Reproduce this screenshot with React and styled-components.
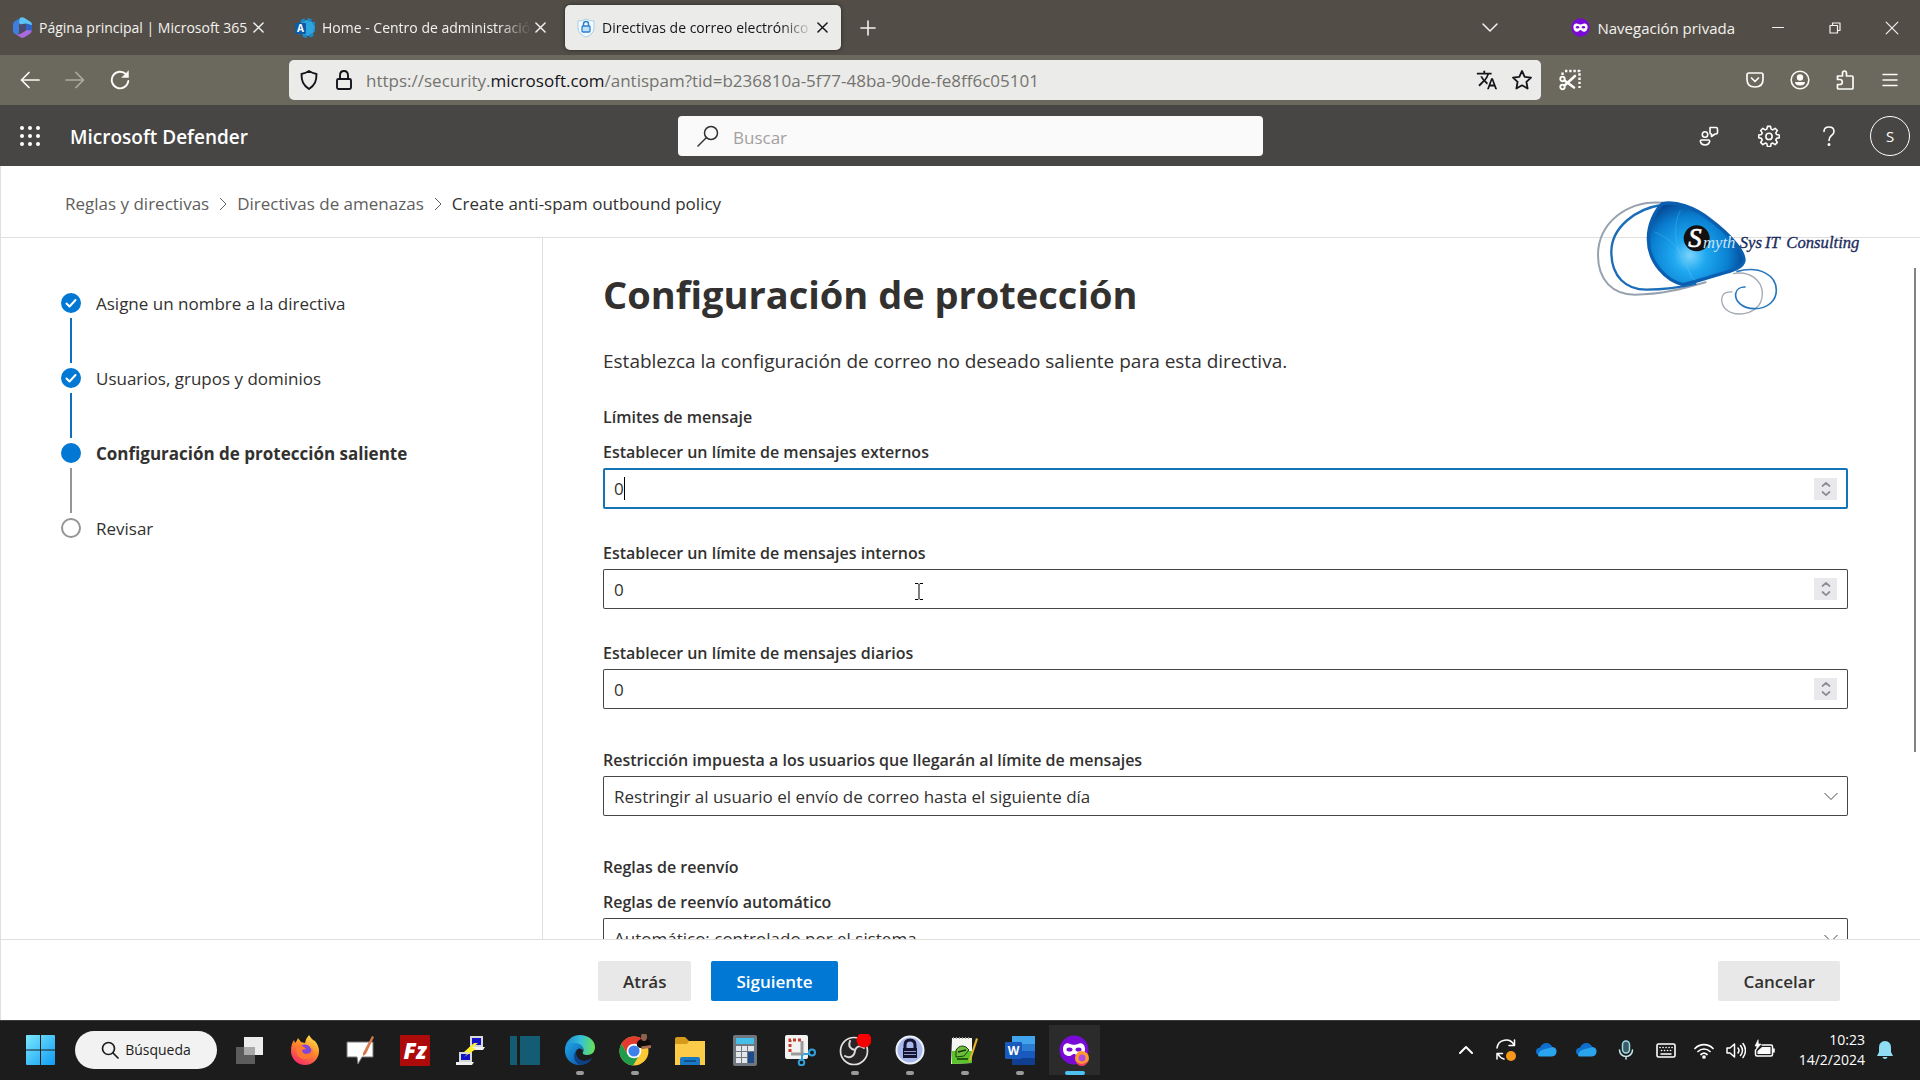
import React from "react";
import styled, { createGlobalStyle, css } from "styled-components";
import { MdTranslate } from "react-icons/md";

const GlobalStyle = createGlobalStyle`
  * { box-sizing: border-box; }
  html, body { margin: 0; padding: 0; background: #fff; }
  body, button, input, select {
    font-family: "Open Sans", "Noto Sans", sans-serif;
    font-size: 17px;
    color: #323130;
  }
  button { background: none; border: 0; padding: 0; cursor: pointer; }
  a { color: inherit; text-decoration: none; }
  h1, h2, p, ol, ul { margin: 0; padding: 0; font-weight: inherit; font-size: inherit; }
  svg { display: block; flex: none; }
`;

const Screen = styled.div`
  display: flex;
  flex-direction: column;
  height: 100vh;
  overflow: hidden;
`;

/* ---------- browser ---------- */

const TabBar = styled.header`
  display: flex;
  align-items: center;
  height: 55px;
  flex: none;
  background: #524e47;
  color: #f3f2ef;
`;

const TabList = styled.div`
  display: flex;
  gap: 6px;
  padding-left: 1px;
`;

const Tab = styled.div`
  display: flex;
  align-items: center;
  width: 276px;
  height: 45px;
  padding: 0 10px 0 12px;
  border-radius: 5px;
  ${(p) =>
    p.$active &&
    css`
      background: #ebebe9;
      color: #15141a;
      box-shadow: 0 0 4px rgba(0, 0, 0, 0.5);
    `}
`;

const TabTitle = styled.span`
  flex: 1;
  min-width: 0;
  margin-left: 7px;
  overflow: hidden;
  white-space: nowrap;
  font-size: 14px;
  line-height: 24px;
  mask-image: ${(p) => (p.$fade ? "linear-gradient(to left, transparent, #000 32px)" : "none")};
`;

const IconButton = styled.button`
  display: flex;
  align-items: center;
  justify-content: center;
  flex: none;
  width: ${(p) => p.$w || 45}px;
  height: ${(p) => p.$h || 40}px;
  color: inherit;
  opacity: ${(p) => (p.$dim ? 0.45 : 1)};
`;

const Spacer = styled.div`
  flex: 1;
`;

const PrivateBadge = styled.div`
  display: flex;
  align-items: center;
  gap: 7px;
  margin: 0 14px 0 64px;
  font-size: 15px;
  line-height: 24px;
  white-space: nowrap;
`;

const NavBar = styled.nav`
  display: flex;
  align-items: center;
  height: 50px;
  flex: none;
  padding: 0 8px 0 7px;
  background: #6b685d;
  color: #fbfbf8;
`;

const NavGroup = styled.div`
  display: flex;
  flex: none;
  width: ${(p) => p.$w || "auto"};
`;

const UrlBar = styled.div`
  display: flex;
  align-items: center;
  flex: 1;
  min-width: 0;
  height: 40px;
  padding: 0 2px 0 2px;
  border-radius: 5px;
  background: #ebebe9;
  color: #15141a;
`;

const Url = styled.span`
  flex: 1;
  margin-left: 5px;
  padding-top: 2px;
  overflow: hidden;
  white-space: nowrap;
  font-size: 17px;
  line-height: 24px;
  color: #74736f;
  b {
    font-weight: 400;
    color: #15141a;
  }
`;

/* ---------- product header ---------- */

const SuiteBar = styled.header`
  display: flex;
  align-items: center;
  height: 61px;
  flex: none;
  padding: 0 10px 0 7px;
  background: #484644;
  color: #fff;
`;

const SuiteSide = styled.div`
  display: flex;
  align-items: center;
  justify-content: ${(p) => (p.$end ? "flex-end" : "flex-start")};
  flex: ${(p) => (p.$end ? "1" : "0 0 671px")};
`;

const Brand = styled.a`
  margin-left: 18px;
  padding-top: 3px;
  font-size: 19px;
  line-height: 28px;
  font-weight: 600;
`;

const SearchBox = styled.label`
  display: flex;
  align-items: center;
  gap: 14px;
  width: 585px;
  height: 40px;
  padding: 0 19px;
  border-radius: 4px;
  background: #fafafa;
  color: #323130;
  input {
    flex: 1;
    min-width: 0;
    border: 0;
    padding: 3px 0 0;
    outline: 0;
    background: none;
    font-size: 17px;
  }
  input::placeholder {
    color: #a3a19f;
    opacity: 1;
  }
`;

const Avatar = styled.button`
  width: 40px;
  height: 40px;
  margin-left: 11px;
  border: 1px solid #fff;
  border-radius: 50%;
  color: #fff;
  font-size: 15px;
`;

/* ---------- wizard page ---------- */

const Page = styled.div`
  display: flex;
  flex-direction: column;
  flex: 1;
  min-height: 0;
  border-left: 1px solid #e1dfdd;
  position: relative;
`;

const Breadcrumb = styled.nav`
  display: flex;
  align-items: center;
  gap: 7px;
  height: 72px;
  flex: none;
  padding: 4px 64px 0;
  border-bottom: 1px solid #e1dfdd;
  line-height: 24px;
  color: #605e5c;
  [aria-current] {
    color: #323130;
  }
`;

const Body = styled.div`
  display: flex;
  flex: 1;
  min-height: 0;
`;

const Steps = styled.ol`
  flex: none;
  width: 542px;
  padding: 53px 59px;
  border-right: 1px solid #e1dfdd;
  list-style: none;
`;

const Step = styled.li`
  display: flex;
  gap: 14px;
  height: 75px;
  line-height: 26px;
  font-weight: ${(p) => (p.$state === "current" ? 700 : 400)};
`;

const StepTrack = styled.div`
  display: flex;
  flex-direction: column;
  align-items: center;
  gap: 5px;
  padding-top: 2px;
  width: 22px;
`;

const Dot = styled.span`
  display: flex;
  align-items: center;
  justify-content: center;
  flex: none;
  width: 20px;
  height: 20px;
  border-radius: 50%;
  border: 2px solid ${(p) => (p.$state === "todo" ? "#979593" : "#0078d4")};
  background: ${(p) => (p.$state === "todo" ? "#fff" : "#0078d4")};
`;

const Rail = styled.span`
  width: 2px;
  height: 45px;
  background: ${(p) => (p.$done ? "#106ebe" : "#979593")};
`;

const Content = styled.main`
  flex: 1;
  min-width: 0;
  padding: 28px 72px 0 60px;
  overflow: hidden;
`;

const Title = styled.h1`
  font-size: 38px;
  line-height: 56px;
  font-weight: 700;
`;

const Lead = styled.p`
  margin-top: 25px;
  font-size: 19px;
  line-height: 28px;
`;

const Section = styled.h2`
  margin-top: ${(p) => p.$gap}px;
  font-size: 16px;
  line-height: 24px;
  font-weight: 600;
`;

const Field = styled.div`
  margin-top: ${(p) => p.$gap}px;
`;

const FieldLabel = styled.label`
  display: block;
  font-size: 16px;
  line-height: 24px;
  font-weight: 600;
`;

const FieldBox = styled.div`
  display: flex;
  align-items: center;
  position: relative;
  height: ${(p) => (p.$focused ? 41 : 40)}px;
  margin-top: 4px;
  border-radius: 2px;
  box-shadow: inset 0 0 0 ${(p) => (p.$focused ? "2px #1374b8" : "1px #484644")};
`;

const NumberInput = styled.input`
  flex: 1;
  min-width: 0;
  height: 100%;
  padding: 0 11px;
  border: 0;
  outline: 0;
  background: none;
  appearance: textfield;
  &::-webkit-inner-spin-button {
    display: none;
  }
`;

const Spinner = styled.span`
  display: flex;
  align-items: center;
  justify-content: center;
  width: 23px;
  height: 22px;
  margin-right: 11px;
  background: #e9e9ed;
  color: #8b8b90;
`;

const Caret = styled.span`
  position: absolute;
  left: 21px;
  top: 9px;
  width: 1px;
  height: 23px;
  background: #000;
`;

const Pointer = styled.svg`
  position: absolute;
  left: 311px;
  top: 14px;
`;

const Select = styled.select`
  width: 100%;
  height: 100%;
  padding: 0 40px 0 11px;
  border: 0;
  outline: 0;
  background: none;
  appearance: none;
`;

const SelectArrow = styled.svg`
  position: absolute;
  right: 10px;
  top: 16px;
  pointer-events: none;
`;

const ScrollThumb = styled.div`
  position: absolute;
  right: 4px;
  top: 102px;
  width: 2px;
  height: 484px;
  background: #858381;
`;

const Footer = styled.footer`
  display: flex;
  align-items: center;
  gap: 20px;
  height: 81px;
  flex: none;
  padding: 2px 80px 0 597px;
  border-top: 1px solid #e1dfdd;
`;

const Action = styled.button`
  height: 40px;
  padding: 0 25px;
  border-radius: 2px;
  font-weight: 600;
  background: ${(p) => (p.$primary ? "#0078d4" : "#e8e8e8")};
  color: ${(p) => (p.$primary ? "#fff" : "#323130")};
`;

const Watermark = styled.svg`
  position: absolute;
  right: 53px;
  top: 31px;
`;

/* ---------- taskbar ---------- */

const Taskbar = styled.footer`
  display: flex;
  align-items: center;
  height: 60px;
  flex: none;
  padding: 0 24px 2px 26px;
  background: #1c1c1c;
  border-top: 1px solid #3a3a3a;
  color: #fff;
`;

const SearchPill = styled.button`
  display: flex;
  align-items: center;
  justify-content: center;
  gap: 6px;
  width: 142px;
  height: 38px;
  margin: 0 5px 0 20px;
  border-radius: 19px;
  background: #f2f2f2;
  color: #1c1c1c;
  font-size: 14px;
`;

const AppSlot = styled.button`
  display: flex;
  align-items: center;
  justify-content: center;
  position: relative;
  width: 55px;
  height: 50px;
  padding: 0 2px;
  background: ${(p) => (p.$run === "active" ? "#2b2b2b" : "none")};
  background-clip: content-box;
  &::after {
    content: "";
    display: ${(p) => (p.$run ? "block" : "none")};
    position: absolute;
    bottom: 0;
    width: ${(p) => (p.$run === "active" ? 20 : 8)}px;
    height: 4px;
    border-radius: 2px;
    background: ${(p) => (p.$run === "active" ? "#4cc2f1" : "#9a9a9a")};
  }
`;

const Clock = styled.time`
  margin: 0 9px 0 12px;
  width: 75px;
  text-align: right;
  font-size: 14px;
  line-height: 20px;
`;

/* ---------- icons ---------- */

const Line = ({ s = 20, w = 2, vb = 20, children, ...rest }) => (
  <svg
    width={s}
    height={s}
    viewBox={`0 0 ${vb} ${vb}`}
    fill="none"
    stroke="currentColor"
    strokeWidth={w}
    strokeLinecap="round"
    strokeLinejoin="round"
    aria-hidden="true"
    {...rest}
  >
    {children}
  </svg>
);

const Cross = ({ s = 12, w = 1.6 }) => (
  <Line s={s} vb={12} w={w}><path d="M1 1 11 11M11 1 1 11" /></Line>
);

const Mask = ({ s }) => (
  <svg width={s} height={s} viewBox="0 0 32 32" aria-hidden="true">
    <circle cx="16" cy="16" r="15.500" fill="#7a0bd6" />
    <path d="M4 15c0-5 4-7 8-5 2 1 6 1 8 0 4-2 8 0 8 5 0 5-3 8-6 8s-4-3-6-3-3 3-6 3-6-3-6-8z" fill="#fff" />
    <ellipse cx="11" cy="15.500" rx="2.800" ry="2.200" fill="#7a0bd6" />
    <ellipse cx="21" cy="15.500" rx="2.800" ry="2.200" fill="#7a0bd6" />
  </svg>
);

const M365Icon = () => (
  <svg width="19" height="21" viewBox="0 0 19 21" aria-hidden="true">
    <path d="M7 1 1.500 4.500Q0 5.500 0 7.500V14q0 2 2 3l1.500.8Q6 18 6 14V7q0-3 4-5z" fill="#3c7fe0" />
    <path d="M7 1q2-1.300 4.500 0l5.500 3.500q2 1 2 3V13q0-4-5-4Q6 9 6 5z" fill="#5cc3f2" />
    <path d="M19 12.500q0 3-2 4.200l-5.500 3.500q-2 1.200-4 0L3 17.600q3 0 6-1.600l4-2.500q2-1.500 1-4.500 5 0 5 3.500z" fill="#a86ae0" />
    <path d="M13 6.500 19 8v5.500l-6-.5z" fill="#2d62c9" />
    <path d="M6.500 7.500 13 6.500v6L8 15.500l-1.500-1z" fill="#4a4a6e" />
  </svg>
);

const AdminIcon = () => (
  <svg width="20" height="22" viewBox="0 0 20 22" aria-hidden="true">
    <circle cx="12" cy="11" r="8" fill="#2aa5e0" />
    <circle cx="12" cy="11" r="8.500" fill="none" stroke="#1988cc" strokeWidth="3" strokeDasharray="4 2.700" />
    <rect x="0" y="6" width="11" height="11" rx="1" fill="#0b5ca8" />
    <text x="5.500" y="14.800" fontFamily="Open Sans, sans-serif" fontWeight="700" fontSize="10" fill="#fff" textAnchor="middle">A</text>
  </svg>
);

const DefenderIcon = () => (
  <svg width="18" height="20" viewBox="0 0 18 20" fill="none" aria-hidden="true">
    <path d="M9 1Q12 3 17 3v7q0 6-8 9-8-3-8-9V3q5 0 8-2z" fill="#f4fbff" stroke="#a6cfe6" />
    <path d="M6.500 8.500V6q0-2.500 2.500-2.500T11.500 6v2.500" stroke="#2b7fd0" strokeWidth="1.500" />
    <rect x="5" y="8" width="8" height="6" rx="1" fill="#bfe0f8" stroke="#2b7fd0" strokeWidth="1.300" />
  </svg>
);

const ScissorIcon = () => (
  <Line s={22} vb={22} w={1.900}>
    <path d="M3.500 6V3.500M6 2h14.500v17" strokeDasharray="2.400 1.800" strokeLinecap="butt" strokeWidth="2.400" />
    <circle cx="3.500" cy="10" r="2.200" />
    <circle cx="3.500" cy="18" r="2.200" />
    <path d="M5.500 16.500 16 7M5.500 11.500 15 18.500" strokeWidth="2.600" />
  </Line>
);

const Waffle = () => (
  <svg width="20" height="20" viewBox="0 0 20 20" fill="currentColor" aria-hidden="true">
    {[2, 10, 18].map((y) => [2, 10, 18].map((x) => <circle key={`${x}-${y}`} cx={x} cy={y} r="2" />))}
  </svg>
);

const GearIcon = () => (
  <Line s={22} vb={24} w={1.700}>
    <path d="M10.300 1.500h3.400l.6 3 1.800.8 2.600-1.700 2.400 2.400-1.700 2.600.8 1.800 3 .6v3l-3 .6-.8 1.800 1.700 2.600-2.400 2.400-2.600-1.700-1.800.8-.6 3h-3.400l-.6-3-1.800-.8-2.600 1.700L2.900 19l1.700-2.600-.8-1.800-3-.6v-3l3-.6.8-1.800L2.900 6l2.400-2.400 2.600 1.700 1.800-.8z" />
    <circle cx="12" cy="12.500" r="3.400" />
  </Line>
);

const Logo = () => (
  <Watermark width="274" height="120" viewBox="100 110 822 360" fill="none" role="img" aria-label="Smyth Sys IT Consulting">
    <defs>
      <radialGradient id="drop" cx="390" cy="285" r="165" gradientUnits="userSpaceOnUse">
        <stop offset="0" stopColor="#7ad4fc" />
        <stop offset="0.3" stopColor="#1fa8f0" />
        <stop offset="0.7" stopColor="#0a80d2" />
        <stop offset="1" stopColor="#064a96" />
      </radialGradient>
    </defs>
    <path d="M310 127C200 118 115 190 115 285c0 75 45 118 110 118 80 0 145-18 215-38" stroke="#98a2ae" strokeWidth="6" />
    <path d="M305 134C230 145 155 200 155 275c0 75 45 113 105 113 60 0 100-6 150-18" stroke="#1b6db8" strokeWidth="7" />
    <path d="M520 340c50-10 88 20 88 60 0 40-33 61-68 61s-55-21-54-46c2-15 14-22 32-20" stroke="#a4abb5" strokeWidth="4" />
    <path d="M530 334c70-20 120 11 120 56 0 30-25 55-65 55s-60-25-57-45c2-13 14-21 30-20" stroke="#2476bd" strokeWidth="5" />
    <path d="M308 130c40-8 95 10 142 47 60 45 104 95 103 123-2 22-35 32-75 42-40 12-75 24-108 31-50-12-104-65-104-138 0-45 20-83 42-105z" fill="url(#drop)" stroke="#0b5fb0" strokeWidth="10" />
    <path d="M362 150c-25 50-20 130 45 210M285 215c50 20 90 60 110 140" stroke="#5cc4fa" strokeOpacity="0.35" strokeWidth="3" />
    <circle cx="411" cy="234" r="39" fill="#14100f" />
    <g fontFamily="Liberation Serif, serif" fontStyle="italic" fontSize="50">
      <text x="386" y="260" fontSize="80" fill="#fff" stroke="#fff" strokeWidth="2">S</text>
      <text x="430" y="262" fill="#c9e6fa">myth</text>
      <g fill="#1c2c5c" stroke="#1c2c5c">
        <text x="540" y="262">Sys</text>
        <text x="616" y="262">IT</text>
        <text x="680" y="262">Consulting</text>
      </g>
    </g>
  </Watermark>
);

const A = ({ children }) => (
  <svg width="32" height="32" viewBox="0 0 32 32" fill="none" aria-hidden="true">{children}</svg>
);

const apps = [
  { name: "Vista de tareas", icon: (
    <A><rect x="2" y="13" width="19" height="17" fill="#5c5c5c" /><rect x="10" y="3" width="19" height="18" fill="#ececec" /><rect x="10" y="13" width="11" height="8" fill="#a9a9a9" /></A>) },
  { name: "Firefox", icon: (
    <A>
      <defs><linearGradient id="fx" x1="24" y1="2" x2="8" y2="30" gradientUnits="userSpaceOnUse"><stop stopColor="#ffe14a" /><stop offset="0.45" stopColor="#ff8a2a" /><stop offset="1" stopColor="#f5286a" /></linearGradient></defs>
      <path d="M20 1q3 5 6 6 4 5 4 10a14 14 0 0 1-28 0q0-7 3-11l1 3q2-2 3-5l3 4 4 1q1-5 4-8z" fill="url(#fx)" />
      <circle cx="16" cy="17" r="6.500" fill="#8247d8" /><path d="M7 12q4-2 8 1l2 2-4 1q0 4 5 4 5-1 5-6 3 7-3 10-8 3-12-4z" fill="#ff7a30" />
    </A>) },
  { name: "Pizarra", icon: (
    <A><path d="M3 8h26v15H18l-4 7-1-7H3z" fill="#fff" stroke="#777" /><path d="m19 19 9-17 2 1-8 17-3 2z" fill="#d67b4b" /></A>) },
  { name: "FileZilla", icon: (
    <A><rect x="1" y="1" width="30" height="31" rx="1" fill="#ad0a0a" />
      <text x="16" y="25" textAnchor="middle" fontFamily="Open Sans, sans-serif" fontStyle="italic" fontWeight="800" fontSize="22" fill="#fff">Fz</text></A>) },
  { name: "PuTTY", icon: (
    <A>
      <path d="M16 2h13v11H16zM5 18h13v10H5z" fill="#d8d8d8" /><path d="M18 4h9v7h-9zM7 20h9v6H7z" fill="#1212c8" />
      <path d="M15 13h16l-2 3H15zM2 28h18l-2 3H2z" fill="#f0f0f0" /><path d="m20 9-10 9h5l-5 5 12-8-4-1 6-5z" fill="#ffee2e" />
    </A>) },
  { name: "Panel", icon: (
    <A><path d="M1 2h7v29H1zM11 2h20v29H11z" fill="#145c74" /></A>) },
  { name: "Edge", run: "open", icon: (
    <A>
      <defs>
        <linearGradient id="eg" x1="2" y1="10" x2="30" y2="14" gradientUnits="userSpaceOnUse"><stop stopColor="#1f8fd6" /><stop offset="0.5" stopColor="#35c0d8" /><stop offset="1" stopColor="#66e05a" /></linearGradient>
        <linearGradient id="eb" x1="4" y1="10" x2="24" y2="30" gradientUnits="userSpaceOnUse"><stop stopColor="#1b9de2" /><stop offset="1" stopColor="#0f4fa0" /></linearGradient>
      </defs>
      <path d="M1 16C1 7 8 1 16 1s15 5 15 12c0 5-3 8-8 8-3 0-5-1-4-3 2-3-1-7-6-7-6 0-11 2-12 5z" fill="url(#eg)" />
      <path d="M1 15c1-4 5-6 10-6 5 0 9 3 8 8-1-2-3-3-5-2-2 1-3 4-1 8 3 5 10 5 15 1-3 5-8 7-13 7C7 31 0 24 1 15z" fill="url(#eb)" />
      <path d="M14 15c-6 4-5 13 2 16 5 0 9-2 12-7-5 4-12 4-15-1-2-4-1-7 1-8z" fill="#0d4286" />
    </A>) },
  { name: "Chrome", run: "open", icon: (
    <A>
      <circle cx="15" cy="17" r="14.500" fill="#fcc934" />
      <path d="M15 2.500A14.500 14.500 0 0 0 2.400 9.700L9 21l6-11h13A14.500 14.500 0 0 0 15 2.500z" fill="#e33b2e" />
      <path d="M2.400 9.700A14.500 14.500 0 0 0 14 31.500L21 20l-12 1z" fill="#1e9b4b" />
      <circle cx="15" cy="17" r="7.300" fill="#fff" /><circle cx="15" cy="17" r="5.600" fill="#3d80ec" />
      <path d="M18 12q-1-5 4-7h6q4 1 4 8l-6 1q-6 1-8-2z" fill="#0d0b0b" /><ellipse cx="25" cy="3" rx="3" ry="4" fill="#8d6350" /><path d="M22 12.500 32 11v3l-9 1z" fill="#a36b50" />
    </A>) },
  { name: "Explorador", icon: (
    <A><path d="M1 5q0-2 2-2h8l4 4h14q2 0 2 2v4H1z" fill="#d69a1b" /><path d="M1 10h12l2-3h16v24H1z" fill="#fccb48" /><path d="M6 31v-6q0-2 2-2h16q2 0 2 2v6z" fill="#1a79c2" /><path d="M10 26h12v2H10z" fill="#0d528c" /></A>) },
  { name: "Calculadora", icon: (
    <A><rect x="4" y="1" width="24" height="31" rx="2" fill="#70777e" /><rect x="7" y="4" width="18" height="6" fill="#45bfe8" /><path d="M7 12h5v5H7zM13 12h5v5h-5zM19 12h6v5h-6zM7 18h5v5H7zM13 18h5v5h-5zM7 24h5v5H7zM13 24h5v5h-5z" fill="#e3e7ec" /><path d="M19 18h6v11h-6z" fill="#1c4d88" /></A>) },
  { name: "Recortes", icon: (
    <A>
      <rect x="1" y="1" width="23" height="24" rx="2" fill="#f2f2f2" />
      <path d="M6 18V6h11" stroke="#c53a2a" strokeWidth="3" strokeDasharray="3 2" />
      <path d="M18 7v13M7 20h13" stroke="#9a9a9a" strokeWidth="3" />
      <path d="M18 20v6M20 20h5" stroke="#31a2dc" strokeWidth="2" />
      <circle cx="28" cy="18.500" r="3" stroke="#31a2dc" strokeWidth="2" /><circle cx="17.500" cy="28.500" r="2.800" stroke="#31a2dc" strokeWidth="2" />
    </A>) },
  { name: "OBS", run: "open", icon: (
    <A>
      <circle cx="15" cy="17" r="13.500" fill="#262424" stroke="#e2e2e2" strokeWidth="1.700" />
      <g stroke="#d8d8d8" strokeWidth="2" strokeLinecap="round">
        <path d="M11 7c-2 5 0 8 5 9" />
        <path d="M16 16c2-4 5-5 9-2" />
        <path d="M16 16c0 6-5 9-10 6" />
      </g>
      <circle cx="25" cy="6" r="7.500" fill="#f90000" />
    </A>) },
  { name: "KeePass", run: "open", icon: (
    <A><circle cx="16" cy="16" r="13.500" fill="#a9b8ea" stroke="#eef1fb" strokeWidth="2" /><path d="M11 15V11q0-5 5-5t5 5v4" stroke="#14142e" strokeWidth="3" /><path d="M9 14h14v10H9z" fill="#14142e" /><path d="M10 17.500h12M10 20.500h12" stroke="#8d9cd0" /></A>) },
  { name: "Notepad++", run: "open", icon: (
    <A><path d="M3 4h20v25l-21 1z" fill="#f7f7f2" /><path d="M3 17h20v12l-20 1z" fill="#5cc42a" /><path d="M7 16q4-6 10-3l3 3-5 6-8 1z" fill="#6fbd3d" stroke="#1c3d10" /><path d="M8 25h11M9 18l8-2" stroke="#16340b" strokeWidth="1.500" /><path d="M4 4h18" stroke="#999" strokeWidth="2" strokeDasharray="1 2" /><path d="m20 26 7-22 2 1-7 21-2 2z" fill="#e5b52b" /></A>) },
  { name: "Word", run: "open", icon: (
    <A><rect x="8" y="2" width="23" height="29" rx="1" fill="#2b7cd3" /><path d="M8 2h23v8H8z" fill="#41a5ee" /><path d="M8 17h23v7H8z" fill="#185abd" /><path d="M8 24h23v7H8z" fill="#103f91" /><rect x="1" y="8" width="17" height="17" rx="1" fill="#185abd" /><text x="9.500" y="21" textAnchor="middle" fontFamily="Open Sans, sans-serif" fontWeight="700" fontSize="12" fill="#fff">W</text></A>) },
  { name: "Navegación privada de Firefox", run: "active", icon: (
    <A><circle cx="15" cy="16" r="14.500" fill="#7a0bd6" /><path d="M4 15c0-5 4-7 7-5 2 1 6 1 8 0 3-2 7 0 7 5 0 5-3 7-6 7s-3-2-5-2-2 2-5 2-6-2-6-7z" fill="#fff" /><ellipse cx="10.500" cy="15.500" rx="3" ry="2" fill="#7a0bd6" /><ellipse cx="19.500" cy="15.500" rx="3" ry="2" fill="#7a0bd6" /><circle cx="23" cy="24" r="7" fill="#ff9a2e" /><circle cx="23" cy="24" r="3.500" fill="#b24be0" /><path d="M17 27q5 6 12 0-2 5-6 5-5 0-6-5z" fill="#f53c6a" /></A>) },
];

const Cloud = () => (
  <svg width="22" height="16" viewBox="0 0 22 16" aria-hidden="true">
    <path d="M5 13Q1 13 1 9.500 1 6 5 5.500 7 1 11.500 1q4 0 6 4.500L9 13z" fill="#0f6fcf" />
    <path d="M3 13q1-5 7-6l8-2q4 1 3.500 5-.5 4-4.500 4.500H5q-2 0-2-1.500z" fill="#2aa4ec" />
  </svg>
);

const tray = [
  { name: "Mostrar iconos ocultos", w: 40, icon: <Line s={14} vb={14} w={2}><path d="M1 10 7 4l6 6" /></Line> },
  { name: "Actualizaciones", w: 40, icon: (
    <Line s={22} vb={22} w={1.500}><path d="M2 9a9 9 0 0 1 17-3M19.500 1v5.500H14M9 20q-4-1-6-5M2 20v-5.500h5.500" /><circle cx="16" cy="17" r="5" fill="#f7981d" stroke="none" /></Line>) },
  { name: "OneDrive personal", w: 40, icon: <Cloud /> },
  { name: "OneDrive de trabajo", w: 40, icon: <Cloud /> },
  { name: "Micrófono", w: 40, icon: (
    <Line s={20} w={1.500}><rect x="6.500" y="1" width="7" height="12" rx="3.500" stroke="#9adbe8" fill="#3a5c63" /><path d="M3.500 10a6.500 6.500 0 0 0 13 0M10 16.500V19" stroke="#c9e8ee" /></Line>) },
  { name: "Teclado", w: 40, icon: (
    <Line s={20} w={1.600}><rect x="1" y="4" width="18" height="13" rx="1.500" /><path d="M4 7.500h.1M7 7.500h.1M10 7.500h.1M13 7.500h.1M16 7.500h.1M5.500 10.500h.1M8.500 10.500h.1M11.500 10.500h.1M14.500 10.500h.1M5 14h10" /></Line>) },
  { name: "Wi-Fi", w: 36, icon: (
    <Line s={20} w={1.700}><path d="M1 8.500a12.500 12.500 0 0 1 18 0M4 11.500a8.500 8.500 0 0 1 12 0M7 14.500a4.500 4.500 0 0 1 6 0" /><circle cx="10" cy="17" r="1" fill="currentColor" /></Line>) },
  { name: "Volumen", w: 28, icon: (
    <Line s={20} w={1.500}><path d="M1 8v5h3l4.500 4V4L4 8zM12 8q2 2.500 0 5M14.500 5.500q4 5 0 10M17 3.500q5 7 0 14" /></Line>) },
  { name: "Batería", w: 28, icon: (
    <Line s={22} vb={22} w={1.500}><path d="M9 6h9q1.500 0 1.500 1.500v8q0 1.500-1.500 1.500H4q-1.500 0-1.500-1.500V11M21 10v3" /><path d="M9 8h8.500v7h-13v-3z" fill="currentColor" stroke="none" /><path d="M5 1 2 7h2l-1 4 5-6H5.500z" fill="currentColor" strokeWidth="0.6" /></Line>) },
];

/* ---------- page data ---------- */

const steps = [
  { label: "Asigne un nombre a la directiva", state: "done" },
  { label: "Usuarios, grupos y dominios", state: "done" },
  { label: "Configuración de protección saliente", state: "current" },
  { label: "Revisar", state: "todo" },
];

const NumberField = ({ id, label, gap, focused, children }) => (
  <Field $gap={gap}>
    <FieldLabel htmlFor={id}>{label}</FieldLabel>
    <FieldBox $focused={focused}>
      <NumberInput id={id} type="number" min="0" defaultValue="0" />
      <Spinner>
        <Line s={16} vb={16} w={1.700}><path d="M4.500 5 8 1.800 11.500 5M4.500 11 8 14.200l3.500-3.200" /></Line>
      </Spinner>
      {children}
    </FieldBox>
  </Field>
);

const SelectField = ({ id, label, gap, option }) => (
  <Field $gap={gap}>
    <FieldLabel htmlFor={id}>{label}</FieldLabel>
    <FieldBox>
      <Select id={id}><option>{option}</option></Select>
      <SelectArrow width="14" height="9" viewBox="0 0 14 9" fill="none" stroke="#484644" aria-hidden="true">
        <path d="M.5 1 7 7.500 13.500 1" />
      </SelectArrow>
    </FieldBox>
  </Field>
);

const Chevron = () => (
  <svg width="14" height="14" viewBox="0 0 14 14" fill="none" stroke="currentColor" aria-hidden="true">
    <path d="M4 1 10 7 4 13" />
  </svg>
);

export default function App() {
  return (
    <Screen>
      <GlobalStyle />
      <TabBar>
        <TabList>
          <Tab>
            <M365Icon />
            <TabTitle>Página principal | Microsoft 365</TabTitle>
            <IconButton $w={18} $h={24} aria-label="Cerrar pestaña"><Cross s={11} /></IconButton>
          </Tab>
          <Tab>
            <AdminIcon />
            <TabTitle $fade>Home - Centro de administración</TabTitle>
            <IconButton $w={18} $h={24} aria-label="Cerrar pestaña"><Cross s={11} /></IconButton>
          </Tab>
          <Tab $active>
            <DefenderIcon />
            <TabTitle $fade>Directivas de correo electrónico</TabTitle>
            <IconButton $w={18} $h={24} aria-label="Cerrar pestaña"><Cross s={11} /></IconButton>
          </Tab>
        </TabList>
        <IconButton $w={54} aria-label="Nueva pestaña"><Line s={16} vb={16} w={1.600}><path d="M8 1v14M1 8h14" /></Line></IconButton>
        <Spacer />
        <IconButton $w={34} aria-label="Listar pestañas"><Line s={16} vb={16} w={1.500}><path d="m1 4 7 7 7-7" /></Line></IconButton>
        <PrivateBadge><Mask s={19} />Navegación privada</PrivateBadge>
        <IconButton $w={57} aria-label="Minimizar"><Line s={12} vb={12} w={1}><path d="M.5 5.500h11" /></Line></IconButton>
        <IconButton $w={57} aria-label="Restaurar"><Line s={12} vb={12} w={1.200}><path d="M1 3.500h7.500V11H1zM3.500 3.500V1H11v7.500H8.500" /></Line></IconButton>
        <IconButton $w={57} aria-label="Cerrar"><Cross s={14} w={1} /></IconButton>
      </TabBar>

      <NavBar>
        <NavGroup $w="282px">
          <IconButton aria-label="Atrás"><Line w={1.700}><path d="M19 10H1.500M9 2.500 1.500 10 9 17.500" /></Line></IconButton>
          <IconButton $dim aria-label="Adelante"><Line w={1.700}><path d="M1 10h17.500M11 2.500l7.500 7.500L11 17.500" /></Line></IconButton>
          <IconButton aria-label="Recargar"><Line w={1.900}><path d="M18.300 11A8.300 8.300 0 1 1 16 4.200" /><path d="M18.500 1v6.500H12z" fill="currentColor" strokeWidth="0.500" /></Line></IconButton>
        </NavGroup>
        <UrlBar>
          <IconButton $w={35} aria-label="Protección"><Line w={1.900}><path d="M10 1Q13 3 17.500 4c0 7-1.500 11-7.500 15C4 15 2.500 11 2.500 4Q7 3 10 1z" /></Line></IconButton>
          <IconButton $w={35} aria-label="Información del sitio"><Line w={1.900}><rect x="3" y="9" width="14" height="10" rx="1.500" /><path d="M6 9V5.500Q6 1 10 1t4 4.500V9" /></Line></IconButton>
          <Url>https://security.<b>microsoft.com</b>/antispam?tid=b236810a-5f77-48ba-90de-fe8ff6c05101</Url>
          <IconButton $w={35} aria-label="Traducir"><MdTranslate size={22} /></IconButton>
          <IconButton $w={35} aria-label="Añadir a marcadores"><Line w={1.800}><path d="m10 1 2.700 5.800 6.300.8-4.600 4.300 1.200 6.600L10 15.300l-5.600 3.200 1.200-6.600L1 7.600l6.300-.8z" /></Line></IconButton>
        </UrlBar>
        <NavGroup $w="371px">
          <IconButton $w={58} aria-label="Captura"><ScissorIcon /></IconButton>
          <Spacer />
          <IconButton aria-label="Pocket"><Line s={18} vb={18} w={1.700}><path d="M3 2h12q2 0 2 2v4.500Q17 16 9 16T1 8.500V4q0-2 2-2zM5.500 7 9 10.500 12.500 7" /></Line></IconButton>
          <IconButton aria-label="Cuenta"><Line s={20} w={1.600}><circle cx="10" cy="10" r="8.800" /><circle cx="10" cy="7.500" r="3.200" fill="currentColor" stroke="none" /><path d="M5 12h10q0 3.500-5 3.500T5 12z" fill="currentColor" stroke="none" /></Line></IconButton>
          <IconButton aria-label="Extensiones"><Line s={20} w={1.700}><path d="M2.500 8.500V6H7.500V3.500Q7.500 1 9.500 1t2 2.500V6H17q1 0 1 1v11q0 1-1 1H3.500q-1 0-1-1v-3.500H5q2.300 0 2.300-2.500T5 9.500H2.500z" /></Line></IconButton>
          <IconButton aria-label="Menú"><Line s={16} vb={16} w={1.500}><path d="M1 2.500h14M1 8h14M1 13.500h14" /></Line></IconButton>
        </NavGroup>
      </NavBar>

      <SuiteBar>
        <SuiteSide>
          <IconButton aria-label="Iniciador de aplicaciones"><Waffle /></IconButton>
          <Brand href="#">Microsoft Defender</Brand>
        </SuiteSide>
        <SearchBox>
          <Line s={22} vb={22} w={1.500}><circle cx="14" cy="8" r="6.500" /><path d="M9.500 12.500 1 21" /></Line>
          <input type="search" placeholder="Buscar" aria-label="Buscar" />
        </SearchBox>
        <SuiteSide $end>
          <IconButton $w={60} aria-label="Comunidad"><Line s={20} w={1.600}><circle cx="6" cy="8.500" r="2.700" /><path d="M2.500 14h7q1.500 0 1 2-1 3-4.500 3t-4.500-3q-.5-2 1-2zM11 1.500h6q1.500 0 1.500 1.500v3.500Q18.500 8 17 8h-1l-3.500 2.500V8H12q-1 0-1-1V1.500" /></Line></IconButton>
          <IconButton $w={60} aria-label="Configuración"><GearIcon /></IconButton>
          <IconButton $w={60} aria-label="Ayuda"><Line s={20} w={1.600}><path d="M5 5.500Q5 1 10 1t5 4.500Q15 8 12 10q-2 1.500-2 4.500" /><circle cx="10" cy="18.500" r="0.700" fill="currentColor" /></Line></IconButton>
          <Avatar aria-label="Cuenta de usuario">S</Avatar>
        </SuiteSide>
      </SuiteBar>

      <Page>
        <Breadcrumb aria-label="Ruta">
          <a href="#">Reglas y directivas</a>
          <Chevron />
          <a href="#">Directivas de amenazas</a>
          <Chevron />
          <span aria-current="page">Create anti-spam outbound policy</span>
        </Breadcrumb>
        <Body>
          <Steps>
            {steps.map((s, i) => (
              <Step key={s.label} $state={s.state}>
                <StepTrack>
                  <Dot $state={s.state}>
                    {s.state === "done" && <Line s={12} vb={12} w={2} color="#fff"><path d="m1.500 6.500 3 3 6-6.500" /></Line>}
                  </Dot>
                  {i < steps.length - 1 && <Rail $done={s.state === "done"} />}
                </StepTrack>
                {s.label}
              </Step>
            ))}
          </Steps>
          <Content>
            <Title>Configuración de protección</Title>
            <Lead>Establezca la configuración de correo no deseado saliente para esta directiva.</Lead>
            <Section $gap={30}>Límites de mensaje</Section>
            <NumberField id="externos" label="Establecer un límite de mensajes externos" gap={11} focused>
              <Caret />
            </NumberField>
            <NumberField id="internos" label="Establecer un límite de mensajes internos" gap={32}>
              <Pointer width="10" height="17" viewBox="0 0 10 17" fill="none" stroke="#000" aria-hidden="true">
                <path d="M1 .5h3l1 1 1-1h3M5 1.500v14M1 16.500h3l1-1 1 1h3" />
              </Pointer>
            </NumberField>
            <NumberField id="diarios" label="Establecer un límite de mensajes diarios" gap={32} />
            <SelectField id="restriccion" label="Restricción impuesta a los usuarios que llegarán al límite de mensajes" gap={39} option="Restringir al usuario el envío de correo hasta el siguiente día" />
            <Section $gap={39}>Reglas de reenvío</Section>
            <SelectField id="reenvio" label="Reglas de reenvío automático" gap={11} option="Automático: controlado por el sistema" />
          </Content>
        </Body>
        <Footer>
          <Action>Atrás</Action>
          <Action $primary>Siguiente</Action>
          <Spacer />
          <Action>Cancelar</Action>
        </Footer>
        <ScrollThumb />
        <Logo />
      </Page>

      <Taskbar>
        <button aria-label="Inicio">
          <svg width="29" height="30" viewBox="0 0 29 30" aria-hidden="true">
            <defs><linearGradient id="win" x1="0" y1="0" x2="29" y2="30" gradientUnits="userSpaceOnUse"><stop stopColor="#7ce8fd" /><stop offset="1" stopColor="#0f9cf3" /></linearGradient></defs>
            <path d="M0 1q0-1 1-1h13v14.500H0zM15 0h13q1 0 1 1v13.500H15zM0 15.500h14V30H1q-1 0-1-1zM15 15.500h14V29q0 1-1 1H15z" fill="url(#win)" />
          </svg>
        </button>
        <SearchPill>
          <Line s={18} vb={18} w={1.700}><circle cx="7.500" cy="7.500" r="6" /><path d="m12 12 5 5" /></Line>
          Búsqueda
        </SearchPill>
        {apps.map((a) => (
          <AppSlot key={a.name} $run={a.run} aria-label={a.name}>{a.icon}</AppSlot>
        ))}
        <Spacer />
        {tray.map((t) => (
          <IconButton key={t.name} $w={t.w} aria-label={t.name}>{t.icon}</IconButton>
        ))}
        <Clock>10:23<br />14/2/2024</Clock>
        <IconButton $w={22} aria-label="Notificaciones">
          <svg width="18" height="20" viewBox="0 0 18 20" fill="#8fdcf5" aria-hidden="true">
            <path d="M9 1q6 .5 6 6.500V12l2 4H1l2-4V7.500Q3 1.500 9 1zM6.500 17h5q-.5 2-2.500 2t-2.500-2z" />
          </svg>
        </IconButton>
      </Taskbar>
    </Screen>
  );
}
